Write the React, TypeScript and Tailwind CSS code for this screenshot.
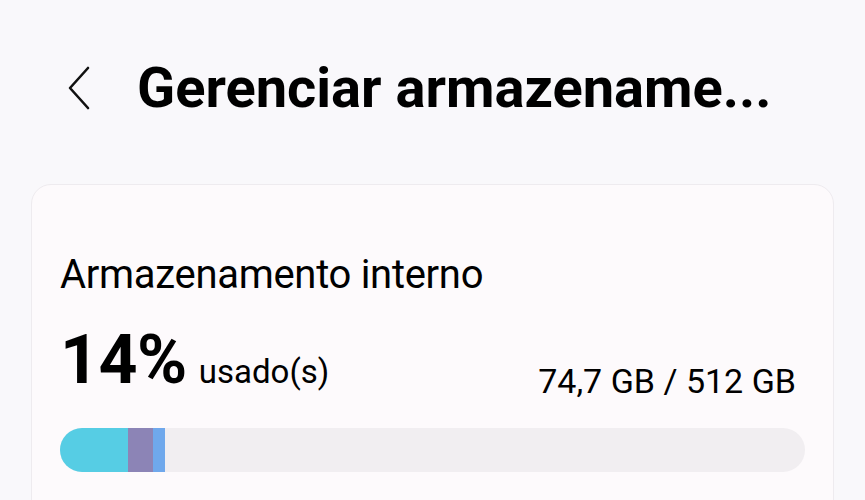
export default function App() {
  const segments = [
    { w: 68, color: 'bg-[#56cde4]' },
    { w: 25, color: 'bg-[#8c84b6]' },
    { w: 12, color: 'bg-[#6fa8ec]' },
  ];

  return (
    <div className="w-[865px] h-[500px] overflow-hidden bg-[#f9f8fb] font-['Roboto',sans-serif] text-black">
      <div className="flex items-center h-[174px] pl-[66px] pt-[2px]">
        <svg width="26" height="44" viewBox="0 0 26 44" fill="none" stroke="#111" strokeWidth="2.6" strokeLinecap="round" strokeLinejoin="round">
          <path d="M22 2 L4 22 L22 42" />
        </svg>
        <h1 className="ml-[45px] text-[56px] font-bold tracking-[0px] leading-none">Gerenciar armazename...</h1>
      </div>

      <div className="mx-[31px] mt-[10px] rounded-[20px] bg-[#fdfafc] border border-[#eeebef] h-[400px] px-[28px] pt-[70px]">
        <div className="text-[40px] leading-none tracking-[-0.3px]">Armazenamento interno</div>
        <div className="flex items-end justify-between mt-[31px] pr-[9px]">
          <div className="flex items-baseline">
            <span className="text-[68px] font-bold leading-none tracking-[-0.5px]">14%</span>
            <span className="ml-[12px] text-[33px] leading-none">usado(s)</span>
          </div>
          <span className="text-[34px] leading-none mb-[-4px]">74,7 GB / 512 GB</span>
        </div>
        <div className="mt-[34px] h-[44px] rounded-full bg-[#f1eef1] overflow-hidden flex">
          {segments.map((s, i) => (
            <div key={i} className={`${s.color} h-full`} style={{ width: s.w }} />
          ))}
        </div>
      </div>
    </div>
  );
}
